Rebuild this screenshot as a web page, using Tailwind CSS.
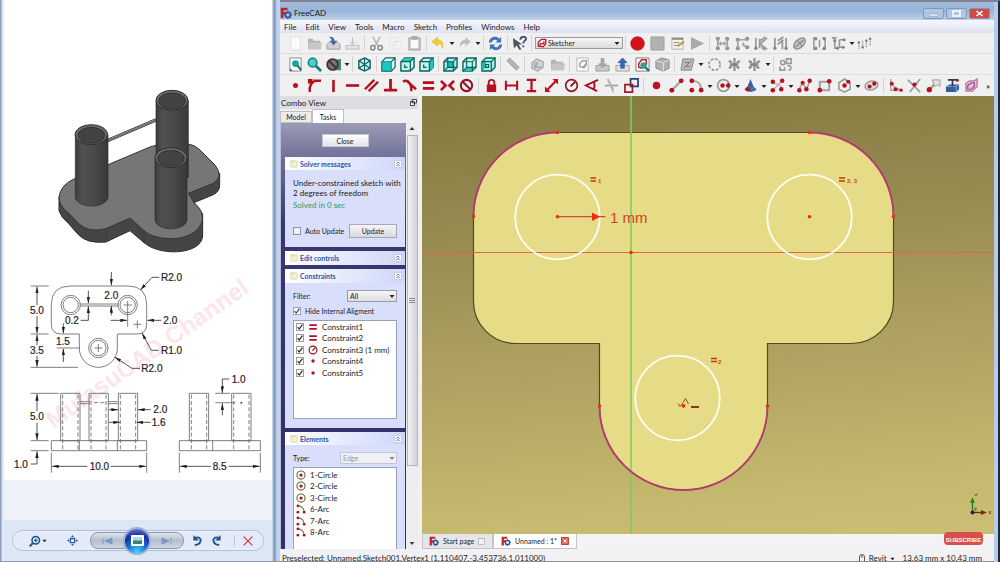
<!DOCTYPE html>
<html lang="en">
<head>
<meta charset="utf-8">
<meta name="viewport" content="width=device-width, initial-scale=1">
<title>FreeCAD</title>
<script src="https://cdn.jsdelivr.net/npm/@tailwindcss/browser@4"></script>
</head>
<body class="h-screen overflow-hidden bg-[#c3d3ea] font-[Lato,'Open_Sans',sans-serif] text-[8px] leading-[10px] text-[#1c1c24]">

<!-- Icon sprite -->
<svg class="hidden" aria-hidden="true">
  <symbol id="new" viewBox="0 0 16 16"><path d="M3 1h10v14H3z" fill="#fbfbfb" stroke="#dedede"/></symbol>
  <symbol id="folder" viewBox="0 0 16 16"><path d="M1 3h5l1 2h7v9H1z" fill="#b4b4b4"/><path d="M2 7h14l-1 7H1z" fill="#c6c6c6"/></symbol>
  <symbol id="save" viewBox="0 0 16 16"><path d="M1 9l3-3h8l3 3v5H1z" fill="#d0d2d6" stroke="#9a9ea6"/><path d="M3 1c4-1 6 1 6 4h3L8 10 4 5h2c0-2-1-3-3-4z" fill="#3f6ba6"/></symbol>
  <symbol id="print" viewBox="0 0 16 16"><path d="M8 1v8M5 6l3 3 3-3M1 10h14v4H1z" fill="#e4e4e4" stroke="#bdbdbd"/></symbol>
  <symbol id="cut" viewBox="0 0 16 16"><path d="M4 1l6 10M12 1L6 11" stroke="#b5b5b5" stroke-width="1.5"/><g fill="none" stroke="#888" stroke-width="1.6"><circle cx="4" cy="12.5" r="2.3"/><circle cx="12" cy="12.5" r="2.3"/></g></symbol>
  <symbol id="copy" viewBox="0 0 16 16"><path d="M2 2h7v8H2zM6 6h8v8H6z" fill="#f3f3f3" stroke="#e2e2e2"/></symbol>
  <symbol id="paste" viewBox="0 0 16 16"><path d="M2 2h12v13H2z" fill="#c9c9c9" stroke="#9f9f9f"/><path d="M4 4h8v9H4z" fill="#fafafa"/><path d="M5 0h6v4H5z" fill="#a9a9a9"/></symbol>
  <symbol id="undo" viewBox="0 0 16 16"><path d="M7 1v3c5 0 7 4 5 9 0-4-2-5-5-5v3L1 6z" fill="#f0cc3a" stroke="#dcb020" stroke-width=".6"/></symbol>
  <symbol id="redo" viewBox="0 0 16 16"><path d="M9 1v3c-5 0-7 4-5 9 0-4 2-5 5-5v3l6-5z" fill="#c0c0c0"/></symbol>
  <symbol id="refresh" viewBox="0 0 16 16"><path d="M1 7c0-6 8-8 11-4l2-2v6H8l2-2C8 3 4 4 4 7zM15 9c0 6-8 8-11 4l-2 2V9h6l-2 2c2 2 6 1 6-2z" fill="#3d74bd"/></symbol>
  <symbol id="whats" viewBox="0 0 16 16"><path d="M1 2l1 11 3-3 3 5 2-1-3-5h4z" fill="#4c5560"/><path d="M9 4c0-4 6-4 6-1 0 2-3 2-3 5M12 10v2" fill="none" stroke="#39506e" stroke-width="2"/></symbol>
  <symbol id="rec" viewBox="0 0 16 16"><circle cx="8" cy="8" r="7.3" fill="#d8101c" stroke="#a50e18" stroke-width=".7"/></symbol>
  <symbol id="stop" viewBox="0 0 16 16"><path d="M1 1h14v14H1z" fill="#b2b2b2" stroke="#9f9f9f"/></symbol>
  <symbol id="macro" viewBox="0 0 16 16"><path d="M2 2h12v12H2z" fill="#f3f3e8" stroke="#b5b5a5"/><path d="M2 2h12v2H2z" fill="#8a8a7a"/><path d="M4 7h6M4 10h4" stroke="#888"/><path d="M15 6l-7 5" stroke="#b8993e" stroke-width="2"/></symbol>
  <symbol id="play" viewBox="0 0 16 16"><path d="M1 1l14 7-14 7z" fill="#a9a9a9"/></symbol>
  <symbol id="gA" viewBox="0 0 16 16"><g fill="#8f8f8f"><circle cx="3" cy="3" r="2.2"/><circle cx="13" cy="3" r="2.2"/><circle cx="3" cy="13" r="2.2"/><circle cx="13" cy="13" r="2.2"/></g><path d="M3 3v10M13 3v10M4 8h8M6 6v4M10 6v4" stroke="#a2a2a2" stroke-width="1.8"/></symbol>
  <symbol id="gB" viewBox="0 0 16 16"><g fill="#8f8f8f"><circle cx="3" cy="4" r="2.2"/><circle cx="13" cy="3" r="2.2"/><circle cx="3" cy="13" r="2.2"/><circle cx="13" cy="12" r="2.2"/></g><path d="M3 4v9M5 4h8M8 9l5 3M9 7v4" stroke="#a2a2a2" stroke-width="1.8"/></symbol>
  <symbol id="gC" viewBox="0 0 16 16"><path d="M2 2v12M6 3v10M7 8l7-6M7 9l7 5M7 5l5-4M8 12l4 3" stroke="#979797" stroke-width="1.8"/><circle cx="2" cy="13" r="1.8" fill="#888"/></symbol>
  <symbol id="gD" viewBox="0 0 16 16"><path d="M2 2v12M14 2v12M5 5l6-4M5 9l6-5M10 4v10" stroke="#979797" stroke-width="1.9"/><circle cx="2" cy="13" r="1.8" fill="#888"/><circle cx="14" cy="13" r="1.8" fill="#888"/></symbol>
  <symbol id="gE" viewBox="0 0 16 16"><ellipse cx="8" cy="8" rx="7.4" ry="4.4" transform="rotate(-42 8 8)" fill="#c5c5c5" stroke="#8c8c8c" stroke-width="1.3"/><path d="M3 12l10-8M6 5l5 6" stroke="#8c8c8c" stroke-width="1.3"/></symbol>
  <symbol id="gF" viewBox="0 0 16 16"><path d="M5 2H2v12h3M11 2h3v12h-3M8 4v8" fill="none" stroke="#959595" stroke-width="1.6"/><g fill="#858585"><circle cx="4" cy="3" r="1.7"/><circle cx="4" cy="13" r="1.7"/><circle cx="13" cy="3" r="1.7"/><circle cx="13" cy="13" r="1.7"/></g></symbol>
  <symbol id="gG" viewBox="0 0 16 16"><path d="M1 2h5M4 5v8h4M9 4h6M9 4v8h5" fill="none" stroke="#959595" stroke-width="1.7"/><g fill="#858585"><circle cx="4" cy="5" r="1.7"/><circle cx="14" cy="4" r="1.7"/><circle cx="7" cy="13" r="1.7"/><circle cx="13" cy="12" r="1.7"/></g></symbol>
  <symbol id="gH" viewBox="0 0 16 16"><path d="M2 7v7M6 5v8M10 4v8M14 2v8" stroke="#9a9a9a" stroke-width="1.3" stroke-dasharray="2 1"/><g fill="#858585"><circle cx="2" cy="7" r="1.4"/><circle cx="6" cy="12" r="1.4"/><circle cx="10" cy="5" r="1.4"/><circle cx="14" cy="3" r="1.4"/></g></symbol>
  <symbol id="fit" viewBox="0 0 16 16"><path d="M2 1h12v14H2z" fill="#fff" stroke="#7b8a8a"/><circle cx="8" cy="7" r="3.6" fill="#1aa398"/><path d="M10 9l4 5" stroke="#0d6d67" stroke-width="2"/><path d="M2 15v-3l3 3z" fill="#555"/></symbol>
  <symbol id="fitsel" viewBox="0 0 16 16"><circle cx="6" cy="6" r="4.6" fill="#4fd0c4" stroke="#0f857c" stroke-width="1.6"/><path d="M9 9l6 6" stroke="#0f857c" stroke-width="3"/></symbol>
  <symbol id="draw" viewBox="0 0 16 16"><path d="M8 3l8-1v12H8z" fill="#3a8d86"/><circle cx="7" cy="8" r="5.7" fill="#777" stroke="#4b2f35" stroke-width="2"/><path d="M3 4l8 8" stroke="#4b2f35" stroke-width="2"/></symbol>
  <symbol id="iso" viewBox="0 0 16 16"><path d="M8 1l6 3v8l-6 3-6-3V4z" fill="#d6f5f1" stroke="#0d625d" stroke-width="1.5"/><path d="M8 1v14M2 4l12 8M14 4L2 12" stroke="#0d625d" stroke-width="1.2"/></symbol>
  <symbol id="front" viewBox="0 0 16 16"><path d="M1 5l4-4h10v10l-4 4H1z" fill="#e9fbf8" stroke="#0d625d" stroke-width="1.3"/><path d="M1 5h10v10H1z" fill="#17cabb" stroke="#0d8880"/><path d="M11 5l4-4" stroke="#0d625d" stroke-width="1.3"/></symbol>
  <symbol id="top" viewBox="0 0 16 16"><path d="M1 5l4-4h10v10l-4 4H1z" fill="#c4f3ee" stroke="#0d625d" stroke-width="1.5"/><path d="M1 5l4-4h10l-4 4z" fill="#17cabb"/><path d="M1 5h10v10M11 5l4-4M5 8v3h3" fill="none" stroke="#0d625d" stroke-width="1.3"/></symbol>
  <symbol id="right" viewBox="0 0 16 16"><path d="M1 5l4-4h10v10l-4 4H1z" fill="#c4f3ee" stroke="#0d625d" stroke-width="1.5"/><path d="M11 5l4-4v10l-4 4z" fill="#17cabb"/><path d="M1 5h10v10M11 5l4-4M5 8v3h3" fill="none" stroke="#0d625d" stroke-width="1.3"/></symbol>
  <symbol id="rear" viewBox="0 0 16 16"><path d="M1 5l4-4h10v10l-4 4H1z" fill="#a6efe8" stroke="#0d625d" stroke-width="1.5"/><path d="M5 5h7v6H5z" fill="#17b9ab"/><path d="M1 5h10v10M11 5l4-4M5 1v10H15M1 15l4-4" fill="none" stroke="#0d625d" stroke-width="1.2"/></symbol>
  <symbol id="bottom" viewBox="0 0 16 16"><path d="M1 5l4-4h10v10l-4 4H1z" fill="#c4f3ee" stroke="#0d625d" stroke-width="1.5"/><path d="M1 15l4-4h10l-4 4z" fill="#17cabb"/><path d="M1 5h10v10M11 5l4-4M5 1v10H15M1 15l4-4" fill="none" stroke="#0d625d" stroke-width="1.2"/></symbol>
  <symbol id="left" viewBox="0 0 16 16"><path d="M1 5l4-4h10v10l-4 4H1z" fill="#a6efe8" stroke="#0d625d" stroke-width="1.5"/><path d="M1 5l4-4v10l-4 4z" fill="#17b9ab"/><path d="M1 5h10v10M11 5l4-4M5 8h3v3H5z" fill="none" stroke="#0d625d" stroke-width="1.3"/></symbol>
  <symbol id="measure" viewBox="0 0 16 16"><path d="M2 4l3-3 10 10-3 3z" fill="#b5b5b5" stroke="#9c9c9c"/></symbol>
  <symbol id="part" viewBox="0 0 16 16"><path d="M2 6l5-4 7 3v6l-6 4-6-3z" fill="#d3d3d3" stroke="#a8a8a8" stroke-width="1.3"/><path d="M5 5v7M8 5l-2 6h6" fill="none" stroke="#a8a8a8" stroke-width="1.5"/></symbol>
  <symbol id="sketch" viewBox="0 0 16 16"><path d="M2 1h12v14H2z" fill="#fafafa" stroke="#b8b8b8"/><path d="M5 10V7l3-3h4v4l-2 3z" fill="none" stroke="#a6a6a6" stroke-width="1.6"/><path d="M8 12l4-5" stroke="#999" stroke-width="1.4"/></symbol>
  <symbol id="mapdown" viewBox="0 0 16 16"><path d="M1 9h14v6H1z" fill="#c9c9c9" stroke="#9e9e9e"/><path d="M6 1h4v6h3l-5 5-5-5h3z" fill="#a5a5a5"/></symbol>
  <symbol id="leave" viewBox="0 0 16 16"><path d="M1 9h14v6H1z" fill="#e2e2e2" stroke="#9e9e9e"/><path d="M8 1l5 5h-3v6H6V6H3z" fill="#3568b5" stroke="#234f92" stroke-width=".6"/></symbol>
  <symbol id="viewsk" viewBox="0 0 16 16"><path d="M1 1h14v14H1z" fill="#fff" stroke="#777"/><path d="M4 11V7l3-4h5v5l-4 4z" fill="none" stroke="#c8202e" stroke-width="1.6"/><circle cx="9" cy="9" r="3.3" fill="#2aa398"/><path d="M11 11l4 4" stroke="#117a70" stroke-width="2.4"/></symbol>
  <symbol id="cubeg" viewBox="0 0 16 16"><path d="M1 4l6-3 8 2v9l-6 3-8-3z" fill="#b0b0b0" stroke="#8b8b8b"/><path d="M1 4l8 2v9M9 6l6-3" fill="none" stroke="#e5e5e5"/></symbol>
  <symbol id="close" viewBox="0 0 16 16"><path d="M3 2h12l-3 12H1z" fill="#b9b9b9" stroke="#858585"/><path d="M4 12l8-8M5 6h5M6 10h5" stroke="#777"/></symbol>
  <symbol id="dash" viewBox="0 0 16 16"><circle cx="8" cy="8" r="6" fill="none" stroke="#9e9e9e" stroke-width="2" stroke-dasharray="3 1.7"/></symbol>
  <symbol id="knot" viewBox="0 0 16 16"><path d="M8 1v14M2 4l11 8M2 12l12-8M3 8h10" stroke="#8f8f8f" stroke-width="2.4" stroke-dasharray="4 1"/><circle cx="8" cy="8" r="2.4" fill="#858585"/></symbol>
  <symbol id="virt" viewBox="0 0 16 16"><g fill="none" stroke="#999" stroke-width="1.7"><circle cx="5" cy="6" r="2.3"/><path d="M9 2h5v5H9zM10 9c5 0 5 5 1 5M2 10v4h5v-3"/></g></symbol>
  <symbol id="pt" viewBox="0 0 16 16"><circle cx="8" cy="8" r="2.7" fill="#bd1022"/></symbol>
  <symbol id="ptbig" viewBox="0 0 16 16"><circle cx="8" cy="8" r="4" fill="#c01020"/></symbol>
  <symbol id="tanpt" viewBox="0 0 16 16"><path d="M3 15C2 9 5 4 9 3M7 3h8" fill="none" stroke="#b31020" stroke-width="2.6"/><path d="M1 1h5v5H1z" fill="#b31020"/></symbol>
  <symbol id="vert" viewBox="0 0 16 16"><path d="M8 2v13" stroke="#b31020" stroke-width="2.8"/></symbol>
  <symbol id="horiz" viewBox="0 0 16 16"><path d="M1 8h14" stroke="#b31020" stroke-width="2.8"/></symbol>
  <symbol id="para" viewBox="0 0 16 16"><path d="M1 12L11 2M5 14L15 4" stroke="#b31020" stroke-width="2.6"/></symbol>
  <symbol id="perp" viewBox="0 0 16 16"><path d="M8 1v12M1 13h14" stroke="#b31020" stroke-width="3"/></symbol>
  <symbol id="tan" viewBox="0 0 16 16"><path d="M1 4c5-3 9 1 9 10M5 3l10 9" fill="none" stroke="#b31020" stroke-width="2.6"/></symbol>
  <symbol id="eq" viewBox="0 0 16 16"><path d="M2 5h12M2 11h12" stroke="#b31020" stroke-width="3"/></symbol>
  <symbol id="sym" viewBox="0 0 16 16"><path d="M1 3l5 5-5 5M15 3l-5 5 5 5" fill="none" stroke="#b31020" stroke-width="2.8"/></symbol>
  <symbol id="block" viewBox="0 0 16 16"><circle cx="8" cy="8" r="6" fill="none" stroke="#8e1420" stroke-width="2.2"/><path d="M4 4l8 8" stroke="#8e1420" stroke-width="2.2"/></symbol>
  <symbol id="lock" viewBox="0 0 16 16"><path d="M5 8V5a3 3 0 0 1 6 0v3" fill="none" stroke="#b31020" stroke-width="2"/><path d="M3 7h10v8H3z" fill="#b31020"/></symbol>
  <symbol id="hd" viewBox="0 0 16 16"><path d="M2 3v10M14 3v10M2 8h12" stroke="#b31020" stroke-width="2.2"/></symbol>
  <symbol id="vd" viewBox="0 0 16 16"><path d="M3 2h10M3 14h10M8 2v12" stroke="#b31020" stroke-width="2.4"/></symbol>
  <symbol id="dist" viewBox="0 0 16 16"><path d="M3 13L13 3" stroke="#c41020" stroke-width="2.4"/><path d="M1 9l6 6H1zM9 1h6v6z" fill="#c41020"/></symbol>
  <symbol id="rad" viewBox="0 0 16 16"><circle cx="8" cy="8" r="6.2" fill="none" stroke="#8e1420" stroke-width="1.8"/><path d="M7 9l5-5" stroke="#8e1420" stroke-width="2"/></symbol>
  <symbol id="ang" viewBox="0 0 16 16"><path d="M15 2L2 8l12 6M10 4c2 3 2 5 0 8" fill="none" stroke="#a31020" stroke-width="2"/></symbol>
  <symbol id="snell" viewBox="0 0 16 16"><path d="M1 8h14" stroke="#999" stroke-width="1.6"/><path d="M4 1l6 14M5 3l5 9" stroke="#b6b6b6" stroke-width="2"/></symbol>
  <symbol id="toggle" viewBox="0 0 16 16"><path d="M7 1h8v8H7z" fill="none" stroke="#263f78" stroke-width="1.8"/><path d="M1 7h8v8H1z" fill="none" stroke="#9e1826" stroke-width="1.8"/></symbol>
  <symbol id="line" viewBox="0 0 16 16"><path d="M3 13L13 3" stroke="#a3a3a3" stroke-width="2.4"/><g fill="#b8101f"><circle cx="3" cy="13" r="2.6"/><circle cx="13" cy="3" r="2.6"/></g></symbol>
  <symbol id="arc" viewBox="0 0 16 16"><path d="M4 3c6 0 9 4 9 10" fill="none" stroke="#a3a3a3" stroke-width="2"/><g fill="#b8101f"><circle cx="3" cy="3" r="2.5"/><circle cx="3" cy="13" r="2.5"/><circle cx="13" cy="13" r="2.5"/></g></symbol>
  <symbol id="circ" viewBox="0 0 16 16"><circle cx="8" cy="8" r="6.3" fill="none" stroke="#989898" stroke-width="1.8"/><g fill="#b8101f"><circle cx="7" cy="8" r="2.4"/><circle cx="13" cy="8" r="2.4"/></g></symbol>
  <symbol id="conic" viewBox="0 0 16 16"><path d="M8 1l4 10H4z" fill="#3a5f97"/><ellipse cx="8" cy="12" rx="6" ry="2.8" fill="#446ca8"/><circle cx="5" cy="12" r="2.3" fill="#b8101f"/></symbol>
  <symbol id="bsp" viewBox="0 0 16 16"><path d="M3 3c3 8 7-2 10 10M3 13L13 3" fill="none" stroke="#b4b4b4" stroke-width="1.4"/><g fill="#b8101f"><circle cx="3" cy="4" r="2.4"/><circle cx="13" cy="3" r="2.4"/><circle cx="3" cy="13" r="2.4"/><circle cx="12" cy="12" r="2.4"/></g></symbol>
  <symbol id="poly" viewBox="0 0 16 16"><path d="M2 13l4-8 4 7 4-9" fill="none" stroke="#a3a3a3" stroke-width="1.8"/><g fill="#b8101f"><circle cx="2.5" cy="13" r="2.4"/><circle cx="6" cy="5" r="2.2"/><circle cx="10" cy="12" r="2.4"/><circle cx="13.5" cy="3" r="2.4"/></g></symbol>
  <symbol id="rect" viewBox="0 0 16 16"><path d="M3 4h10v9H3z" fill="none" stroke="#a0a0a0" stroke-width="2.2"/><g fill="#b8101f"><circle cx="13" cy="3.5" r="2.5"/><circle cx="3" cy="13" r="2.5"/></g></symbol>
  <symbol id="hex" viewBox="0 0 16 16"><path d="M8 1l6 4v7l-6 3-6-3V5z" fill="none" stroke="#9e9e9e" stroke-width="1.8"/><g fill="#b8101f"><circle cx="8" cy="8" r="2.4"/><circle cx="12" cy="4" r="2.2"/></g></symbol>
  <symbol id="slot" viewBox="0 0 16 16"><ellipse cx="8" cy="8" rx="7" ry="4.6" transform="rotate(-15 8 8)" fill="#ddd" stroke="#9e9e9e" stroke-width="1.6"/><g fill="#b8101f"><circle cx="6" cy="9" r="2.1"/><circle cx="11" cy="6" r="2.3"/></g></symbol>
  <symbol id="fillet" viewBox="0 0 16 16"><path d="M3 1v12h11M4 4c1 5 3 7 9 8" fill="none" stroke="#a5a5a5" stroke-width="1.5"/><g fill="#b8101f"><circle cx="4" cy="6" r="2.1"/><circle cx="8" cy="12" r="2.1"/><circle cx="14" cy="13" r="1.7"/></g></symbol>
  <symbol id="trim" viewBox="0 0 16 16"><path d="M1 2l13 13M14 1L3 15" stroke="#999" stroke-width="1.7"/><circle cx="8" cy="7" r="2.3" fill="#b8101f"/></symbol>
  <symbol id="extend" viewBox="0 0 16 16"><path d="M3 13l7-7" stroke="#a0a0a0" stroke-width="2.6"/><path d="M7 2h8v7l-3-2-2 2-2-3z" fill="#e0e0e0" stroke="#9a9a9a"/><circle cx="3.5" cy="12.5" r="2.8" fill="#b8101f"/></symbol>
  <symbol id="ext" viewBox="0 0 16 16"><path d="M1 9l4-2h10v5l-3 3H1z" fill="#355f99"/><path d="M1 9h11v6M12 9l3-2" fill="none" stroke="#82a9da"/><path d="M8 3v6M3 2h11" stroke="#2e3b52" stroke-width="1.8"/><circle cx="13" cy="2.5" r="1.6" fill="#b8101f"/></symbol>
  <symbol id="carbon" viewBox="0 0 16 16"><path d="M2 6l4-3h5l3-2v8l-5 5H2z" fill="#e7bfdb" stroke="#b876a6" stroke-width="1.4"/><path d="M4 12V8l4-3h3v4l-3 3z" fill="none" stroke="#8f4a80" stroke-width="1.2"/></symbol>
  <symbol id="logo" viewBox="0 0 16 16"><path d="M1 1h9v3.4H4.6v2.4H8V10H4.600v5H1z" fill="#c5202e"/><circle cx="10.500" cy="10.500" r="3.400" fill="none" stroke="#2f5a94" stroke-width="2.400"/><path d="M10.500 5v2M10.500 14v2M5.500 10.500h1.500M14 10.500h2M7 7l1 1M13 13l1.500 1.500M14 7l-1 1M7 14l1-1" stroke="#2f5a94" stroke-width="1.600"/></symbol>
  <symbol id="chev" viewBox="0 0 10 10"><path d="M.5.5h9v9h-9z" fill="#fbfcff" stroke="#b6bedb"/><path d="M3 4.500l2-2 2 2M3 7.500l2-2 2 2" fill="none" stroke="#4a5792" stroke-width="1.100"/></symbol>
  <symbol id="note" viewBox="0 0 10 10"><path d="M1 1h8v8H1z" fill="#f4f2cf" stroke="#d7d7bd"/><path d="M1 1h5v2H1z" fill="#e6dc8c"/></symbol>
  <symbol id="dd" viewBox="0 0 6 6"><path d="M.5 2h5L3 5z" fill="#222"/></symbol>
  <symbol id="el-circle" viewBox="0 0 16 16"><circle cx="8" cy="8" r="6.500" fill="none" stroke="#5e6e3c" stroke-width="1.800"/><circle cx="8" cy="8" r="2.600" fill="#a01a22"/></symbol>
  <symbol id="el-arc" viewBox="0 0 16 16"><path d="M3 3c6 0 10 4 10 10" fill="none" stroke="#6c7a45" stroke-width="1.800"/><g fill="#a5182a"><circle cx="3" cy="3" r="2.200"/><circle cx="3" cy="13" r="2.200"/><circle cx="13" cy="13" r="2.200"/></g></symbol>
</svg>

<div class="flex h-full">

  <!-- Photo viewer window -->
  <section aria-label="Photo viewer" class="flex h-full w-[28%] flex-none flex-col border-b border-[#8d9ab0] bg-[linear-gradient(90deg,#8e9fbd_0,#8e9fbd_1px,#d9e4f4_2px,#e6eefa_4px,#dfe8f6_97%,#7f95b8_98%,#c2d3ec_99%,#c2d3ec_100%)]">
    <div class="ml-1 mr-2 bg-white">
      <svg viewBox="12 0 804 1440" class="block w-full" role="img" aria-label="Part drawing with isometric view and dimensions">
        <defs>
          <linearGradient id="cyl" x1="0" x2="1"><stop offset="0" stop-color="#3c3c3c"/><stop offset=".2" stop-color="#505050"/><stop offset=".55" stop-color="#4a4a4a"/><stop offset="1" stop-color="#393939"/></linearGradient>
          <marker id="ar" viewBox="0 0 20 10" refX="20" refY="5" markerWidth="20" markerHeight="10" markerUnits="userSpaceOnUse" orient="auto-start-reverse"><path d="M0 0l20 5-20 5z" fill="#222"/></marker>
        </defs>
        <g transform="translate(0 180)">
          <path d="M177 410V452Q182 470 205 490L235 524Q262 552 318 546L390 512L432 548C470 580 550 585 590 558Q608 545 608 525V462L582 428L640 404Q659 395 659 375V340L560 300Z" fill="#454545" stroke="#2e2e2e" stroke-width="3"/>
          <path d="M177 412Q180 375 226 355L322 315L452 260Q490 248 565 252Q585 255 600 270L645 315Q672 350 640 370L565 400L582 428Q610 450 607 480C600 515 560 538 505 536Q455 533 432 512L390 474L318 506Q265 520 235 490L205 458Q178 440 177 412Z" fill="#767676" stroke="#343434" stroke-width="3"/>
          <path d="M322 238l148-63M322 246l148-63" stroke="#3a3a3a" stroke-width="3"/><path d="M322 242l148-63" stroke="#6f6f6f" stroke-width="5"/>
          <path d="M468 122v230h97V122z" fill="url(#cyl)" stroke="#2c2c2c" stroke-width="2"/>
          <ellipse cx="516" cy="121" rx="48" ry="30" fill="#6a6a6a" stroke="#2c2c2c" stroke-width="3"/><ellipse cx="516" cy="123" rx="40" ry="24" fill="#434343" stroke="#222" stroke-width="2"/>
          <path d="M226 224v190c10 32 88 32 98 0V224z" fill="url(#cyl)" stroke="#2c2c2c" stroke-width="2"/>
          <ellipse cx="274" cy="224" rx="49" ry="30" fill="#6a6a6a" stroke="#2c2c2c" stroke-width="3"/><ellipse cx="274" cy="226" rx="40" ry="24" fill="#434343" stroke="#222" stroke-width="2"/>
          <path d="M465 293v188c8 34 88 34 96 0V293z" fill="url(#cyl)" stroke="#2c2c2c" stroke-width="2"/>
          <ellipse cx="513" cy="293" rx="48" ry="30" fill="#6a6a6a" stroke="#2c2c2c" stroke-width="3"/><ellipse cx="513" cy="295" rx="40" ry="24" fill="#434343" stroke="#222" stroke-width="2"/>
          <path d="M318 508v38M432 514v34M205 460v30" stroke="#383838" stroke-width="2"/>
        </g>
        <g transform="translate(0 780)" font-family="'Liberation Sans',Arial,sans-serif">
          <text x="160" y="508" font-size="73" font-weight="bold" fill="#fbe6e9" transform="rotate(-35 160 508)">MufasuCAD Channel</text>
          <g fill="none" stroke="#666" stroke-width="2.500">
            <path d="M212 78H384q56 0 56 56v58q0 30-30 30H352v43a57 57 0 0 1-114 0v-43H184q-30 0-30-30v-58q0-56 58-56z"/>
            <circle cx="212" cy="135" r="29"/><circle cx="212" cy="135" r="23"/>
            <circle cx="383" cy="135" r="29"/><circle cx="383" cy="135" r="23"/>
            <circle cx="295" cy="264" r="29"/><circle cx="295" cy="264" r="23"/>
            <path d="M241 132h113M241 138h113M371 135h26M383 123v77M400 193h24M412 181v24M283 264h24M295 252v24"/>
            <path d="M92 78h54M92 222h54M92 322h142M170 264h70"/>
            <path d="M154 542h286v30H154zM238 542v30M352 542v30M182 400h58v142h-58zM267 400h58v142h-58zM355 400h58v142h-58zM568 400h58v142h-58zM695 400h58v142h-58zM538 542h243v30H538zM638 542v30M241 425h28M325 425h28M241 431h28M325 431h28"/>
            <path d="M188 404v166M234 404v166M273 404v166M318 404v166M361 404v166M407 404v166M574 404v166M620 404v166M701 404v166M747 404v166M282 428h40" stroke-dasharray="12 7"/>
            <path d="M92 400h84M92 542h54M92 572h54M154 578v60M440 578v60M538 578v60M781 578v60M646 400h44M646 428h60"/>
          </g>
          <g fill="none" stroke="#333" stroke-width="2.500">
            <path d="M111 135V80" marker-end="url(#ar)"/><path d="M111 168v52" marker-end="url(#ar)"/>
            <path d="M111 256v-32" marker-end="url(#ar)"/><path d="M111 288v32" marker-end="url(#ar)"/>
            <path d="M111 454v-52" marker-end="url(#ar)"/><path d="M111 488v52" marker-end="url(#ar)"/>
            <path d="M92 612h19v-38" marker-end="url(#ar)"/>
            <path d="M334 36v40" marker-end="url(#ar)"/><path d="M334 166v-28" marker-end="url(#ar)"/>
            <path d="M265 92v38" marker-end="url(#ar)"/><path d="M242 181h23v-42" marker-end="url(#ar)"/>
            <path d="M190 190v30" marker-end="url(#ar)"/><path d="M190 306v-40" marker-end="url(#ar)"/>
            <path d="M332 181h49" marker-end="url(#ar)"/><path d="M484 181h-42" marker-end="url(#ar)"/>
            <path d="M478 52h-22l-35 38" marker-end="url(#ar)"/><path d="M476 271h-22l-28-52" marker-end="url(#ar)"/><path d="M420 325h-24l-52-34" marker-end="url(#ar)"/>
            <path d="M327 449h27" marker-end="url(#ar)"/><path d="M452 449h-38" marker-end="url(#ar)"/>
            <path d="M327 487h33" marker-end="url(#ar)"/><path d="M452 487h-42" marker-end="url(#ar)"/>
            <path d="M262 619H156" marker-end="url(#ar)"/><path d="M332 619h106" marker-end="url(#ar)"/>
            <path d="M632 619h-92" marker-end="url(#ar)"/><path d="M686 619h93" marker-end="url(#ar)"/>
            <path d="M688 357h-21v42" marker-end="url(#ar)"/><path d="M667 466v-36" marker-end="url(#ar)"/>
          </g>
          <circle cx="724" cy="428" r="3" fill="#444"/>
          <g font-size="30" fill="#1e1e1e" stroke="#1e1e1e" stroke-width=".6">
            <text x="90" y="161">5.0</text><text x="90" y="283">3.5</text><text x="90" y="480">5.0</text><text x="42" y="623">1.0</text>
            <text x="313" y="118">2.0</text><text x="195" y="192">0.2</text><text x="168" y="255">1.5</text><text x="490" y="192">2.0</text>
            <text x="483" y="63">R2.0</text><text x="483" y="283">R1.0</text><text x="424" y="336">R2.0</text>
            <text x="460" y="460">2.0</text><text x="455" y="498">1.6</text><text x="269" y="630">10.0</text><text x="638" y="630">8.5</text><text x="695" y="368">1.0</text>
          </g>
        </g>
      </svg>
    </div>
    <div class="ml-1 mr-2 min-h-0 flex-1 bg-[#eff2fa]"></div>
    <div class="ml-1 mr-2 flex h-[41px] flex-none items-center bg-[#dce6f4] px-2">
      <div class="flex h-[21px] w-full items-center rounded-full border border-[#b3c0d6] bg-[#e2ebf7] pl-4 shadow-[inset_0_0_2px_white]">
        <button aria-label="Change display size" class="flex items-center gap-px"><svg class="size-3" viewBox="0 0 16 16"><circle cx="9" cy="7" r="5" fill="#d5ecfb" stroke="#1e4e84" stroke-width="2"/><path d="M5 11l-4 4" stroke="#1e4e84" stroke-width="2.500"/><path d="M6.500 7h5M9 4.500v5" stroke="#1e4e84" stroke-width="1.500"/></svg><svg class="size-[5px]"><use href="#dd"/></svg></button>
        <button aria-label="Actual size" class="ml-5"><svg class="size-[11px]" viewBox="0 0 16 16"><path d="M5 5h6v6H5z" fill="#e5f3ff" stroke="#2d5c95" stroke-width="2"/><path d="M8 0l2 3H6zM8 16l2-3H6zM0 8l3-2v4zM16 8l-3-2v4z" fill="#2d5c95"/></svg></button>
        <div class="ml-3 flex h-[17px] w-[94px] items-center justify-between rounded-lg border border-[#8a99b3] bg-linear-to-b from-[#dfe4ec] via-[#b7bfcc] to-[#ced6e2]">
          <button aria-label="Previous" class="flex flex-1 justify-center"><svg class="h-2 w-3" viewBox="0 0 12 8"><path d="M2 1v6M11 1v6L4 4z" fill="#7d98c5" stroke="#7d98c5"/></svg></button>
          <button aria-label="Play slide show" class="flex size-[28px] flex-none items-center justify-center rounded-full border-2 border-[#9fb0d3] bg-[radial-gradient(circle_at_50%_95%,#42d8ff_0,#1976d3_35%,#182d9a_65%,#8d9be2_100%)]"><svg class="h-[11px] w-[13px]" viewBox="0 0 13 11"><path d="M.5.5h12v10H.5z" fill="#f6fbff" stroke="#fff"/><path d="M2 2h9v7H2z" fill="#b4dbe0"/><path d="M2 6c3-2 5 1 9-1v4H2z" fill="#3c7f7a"/></svg></button>
          <button aria-label="Next" class="flex flex-1 justify-center"><svg class="h-2 w-3" viewBox="0 0 12 8"><path d="M10 1v6M1 1v6l7-3z" fill="#7d98c5" stroke="#7d98c5"/></svg></button>
        </div>
        <button aria-label="Rotate counterclockwise" class="ml-2"><svg class="size-[11px]" viewBox="0 0 16 16"><path d="M4 5c6-4 10 1 8 5-1 3-5 5-8 4" fill="none" stroke="#1d4f8d" stroke-width="2.600"/><path d="M2 0v8h8z" fill="#1d4f8d"/></svg></button>
        <button aria-label="Rotate clockwise" class="ml-2"><svg class="size-[11px]" viewBox="0 0 16 16"><path d="M12 5c-6-4-10 1-8 5 1 3 5 5 8 4" fill="none" stroke="#1d4f8d" stroke-width="2.600"/><path d="M14 0v8H6z" fill="#1d4f8d"/></svg></button>
        <span class="ml-3 h-[11px] w-px bg-[#b7c4d9]"></span>
        <button aria-label="Delete" class="ml-2"><svg class="size-[10px]" viewBox="0 0 16 16"><path d="M1 1l14 14M15 1L1 15" stroke="#cf4050" stroke-width="2.200"/></svg></button>
      </div>
    </div>
  </section>

  <!-- FreeCAD window -->
  <main class="flex h-full min-w-0 flex-1 flex-col border-r-2 border-t-2 border-r-[#20283c] border-t-[#7d8193] bg-[#b6cbe7] pr-1">
    <header class="flex h-[18px] flex-none items-center bg-linear-to-b from-[#a3bbdc] via-[#98b5da] to-[#bdd1ea] pt-1">
      <svg class="size-3"><use href="#logo"/></svg>
      <h1 class="ml-[2px] text-[8px]">FreeCAD</h1>
      <div class="ml-auto mr-1 flex gap-[2px] [&>button]:flex [&>button]:h-[11px] [&>button]:w-[21px] [&>button]:items-center [&>button]:justify-center [&>button]:rounded-xs [&>button]:border [&>button]:border-[#7f97b8] [&_svg]:h-[7px] [&_svg]:w-[9px]">
        <button aria-label="Minimize" class="bg-[#afc6e2]"><svg viewBox="0 0 9 7"><path d="M0 4h9v2H0z" fill="#fff" stroke="#6f819d" stroke-width=".5"/></svg></button>
        <button aria-label="Maximize" class="bg-[#afc6e2]"><svg viewBox="0 0 9 7"><path d="M1 1h7v5H1z" fill="none" stroke="#fff" stroke-width="1.500"/></svg></button>
        <button aria-label="Close window" class="bg-[#cf4a43]"><svg viewBox="0 0 9 7"><path d="M1.500 1l6 5M7.500 1l-6 5" stroke="#fff" stroke-width="1.600"/></svg></button>
      </div>
    </header>
    <nav aria-label="Main menu" class="flex h-[13px] flex-none items-center gap-[9px] bg-linear-to-b from-[#f6f7fc] to-[#dfe1f2] pl-1 [&>button]:leading-[12px]">
      <button>File</button><button>Edit</button><button>View</button><button>Tools</button><button>Macro</button><button>Sketch</button><button>Profiles</button><button>Windows</button><button>Help</button>
    </nav>

    <!-- Toolbars -->
    <div class="flex-none bg-[#f0f0f0] [&_button]:flex [&_button]:flex-none [&_button]:justify-center [&_button>svg]:size-[15px] [&_hr]:mx-[2px] [&_hr]:h-4 [&_hr]:w-px [&_hr]:flex-none [&_hr]:border-0 [&_hr]:bg-[#d5d5d5] [&_span>svg]:size-[6px] [&_span]:flex [&_span]:w-[7px] [&_span]:flex-none [&_span]:justify-center">
      <div role="toolbar" aria-label="File and macro" class="flex h-[21px] items-center border-b border-[#dcdcdc] pl-[6px] [&>button]:w-[19px] [&>div]:flex [&>div]:items-center">
        <button aria-label="New"><svg><use href="#new"/></svg></button><button aria-label="Open"><svg><use href="#folder"/></svg></button><button aria-label="Save"><svg><use href="#save"/></svg></button><button aria-label="Print"><svg><use href="#print"/></svg></button><hr>
        <button aria-label="Cut"><svg><use href="#cut"/></svg></button><button aria-label="Copy"><svg><use href="#copy"/></svg></button><button aria-label="Paste"><svg><use href="#paste"/></svg></button><hr>
        <button aria-label="Undo"><svg><use href="#undo"/></svg></button><span><svg><use href="#dd"/></svg></span><button aria-label="Redo"><svg><use href="#redo"/></svg></button><span><svg><use href="#dd"/></svg></span><hr>
        <button aria-label="Refresh"><svg><use href="#refresh"/></svg></button><hr><button aria-label="What's this"><svg><use href="#whats"/></svg></button><hr>
        <label class="ml-px flex h-3 w-[88px] flex-none items-center border border-[#9a9a9a] bg-linear-to-b from-[#f6f6f6] to-[#dcdcdc]">
          <svg class="ml-px size-[10px]" viewBox="0 0 16 16"><path d="M2 13V7l5-5h7v7l-4 5z" fill="none" stroke="#b81c2c" stroke-width="2"/><path d="M5 9h6v-4M5 9v4" fill="none" stroke="#b81c2c" stroke-width="2"/></svg>
          <select aria-label="Workbench" class="min-w-0 flex-1 appearance-none pl-px text-[7px] leading-[10px]"><option>Sketcher</option></select>
          <svg class="mr-[2px] size-[6px]"><use href="#dd"/></svg>
        </label>
        <hr class="ml-1"><button aria-label="Record macro"><svg><use href="#rec"/></svg></button><div class="[&>button]:w-5"><button aria-label="Stop macro"><svg><use href="#stop"/></svg></button><button aria-label="Macros"><svg><use href="#macro"/></svg></button><button aria-label="Run macro"><svg><use href="#play"/></svg></button></div><hr>
        <div class="[&>button]:w-5"><button aria-label="Close shape"><svg><use href="#gA"/></svg></button><button aria-label="Connect edges"><svg><use href="#gB"/></svg></button></div><button aria-label="Select constraints"><svg><use href="#gC"/></svg></button><button aria-label="Select elements"><svg><use href="#gD"/></svg></button><button aria-label="Internal geometry"><svg><use href="#gE"/></svg></button><div class="[&>button]:w-5"><button aria-label="Symmetry"><svg><use href="#gF"/></svg></button></div><button aria-label="Clone"><svg><use href="#gG"/></svg></button><span><svg><use href="#dd"/></svg></span><button aria-label="Array"><svg><use href="#gH"/></svg></button>
      </div>
      <div role="toolbar" aria-label="View" class="flex h-[21px] items-center border-b border-[#dcdcdc] pl-[6px] [&>button]:w-[19px] [&>div]:flex [&>div]:items-center">
        <button aria-label="Fit all"><svg><use href="#fit"/></svg></button><button aria-label="Fit selection"><svg><use href="#fitsel"/></svg></button><button aria-label="Draw style"><svg><use href="#draw"/></svg></button><span><svg><use href="#dd"/></svg></span><hr>
        <button aria-label="Isometric"><svg><use href="#iso"/></svg></button><hr>
        <button aria-label="Front"><svg><use href="#front"/></svg></button><button aria-label="Top"><svg><use href="#top"/></svg></button><button aria-label="Right"><svg><use href="#right"/></svg></button><hr>
        <button aria-label="Rear"><svg><use href="#rear"/></svg></button><button aria-label="Bottom"><svg><use href="#bottom"/></svg></button><button aria-label="Left"><svg><use href="#left"/></svg></button><hr>
        <button aria-label="Measure"><svg><use href="#measure"/></svg></button><hr>
        <div class="[&>button]:w-5"><button aria-label="Part"><svg><use href="#part"/></svg></button><button aria-label="Group"><svg><use href="#folder"/></svg></button></div><hr>
        <div class="[&>button]:w-5"><button aria-label="New sketch"><svg><use href="#sketch"/></svg></button><button aria-label="Edit sketch"><svg><use href="#mapdown"/></svg></button><button aria-label="Leave sketch"><svg><use href="#leave"/></svg></button><button aria-label="View sketch"><svg><use href="#viewsk"/></svg></button><button aria-label="Map sketch"><svg><use href="#cubeg"/></svg></button></div><hr>
        <div class="[&>button]:w-5"><button aria-label="B-spline degree"><svg><use href="#close"/></svg></button><span><svg><use href="#dd"/></svg></span><button aria-label="Convert to B-spline"><svg><use href="#dash"/></svg></button><button aria-label="Increase degree"><svg><use href="#knot"/></svg></button><button aria-label="Knot multiplicity"><svg><use href="#knot"/></svg></button><span><svg><use href="#dd"/></svg></span></div><hr>
        <button aria-label="Virtual space"><svg><use href="#virt"/></svg></button>
      </div>
      <div role="toolbar" aria-label="Sketch" class="flex h-[21px] items-center pl-[6px] [&>div]:flex [&>div]:items-center">
        <div class="[&>button]:w-[19px]"><button aria-label="Coincident"><svg><use href="#pt"/></svg></button><button aria-label="Point on object"><svg><use href="#tanpt"/></svg></button><button aria-label="Vertical"><svg><use href="#vert"/></svg></button><button aria-label="Horizontal"><svg><use href="#horiz"/></svg></button><button aria-label="Parallel"><svg><use href="#para"/></svg></button><button aria-label="Perpendicular"><svg><use href="#perp"/></svg></button><button aria-label="Tangent"><svg><use href="#tan"/></svg></button><button aria-label="Equal"><svg><use href="#eq"/></svg></button><button aria-label="Symmetric"><svg><use href="#sym"/></svg></button><button aria-label="Block"><svg><use href="#block"/></svg></button></div><hr>
        <div class="[&>button]:w-5"><button aria-label="Lock"><svg><use href="#lock"/></svg></button><button aria-label="Horizontal distance"><svg><use href="#hd"/></svg></button><button aria-label="Vertical distance"><svg><use href="#vd"/></svg></button><button aria-label="Distance"><svg><use href="#dist"/></svg></button><button aria-label="Radius"><svg><use href="#rad"/></svg></button><button aria-label="Angle"><svg><use href="#ang"/></svg></button><button aria-label="Snell's law"><svg><use href="#snell"/></svg></button><button aria-label="Toggle driving"><svg><use href="#toggle"/></svg></button></div><hr>
        <div class="[&>button]:w-5"><button aria-label="Point"><svg><use href="#ptbig"/></svg></button><button aria-label="Line"><svg><use href="#line"/></svg></button><button aria-label="Arc"><svg><use href="#arc"/></svg></button><span><svg><use href="#dd"/></svg></span><button aria-label="Circle"><svg><use href="#circ"/></svg></button><span><svg><use href="#dd"/></svg></span><button aria-label="Conic"><svg><use href="#conic"/></svg></button><span><svg><use href="#dd"/></svg></span><button aria-label="B-spline"><svg><use href="#bsp"/></svg></button><span><svg><use href="#dd"/></svg></span><button aria-label="Polyline"><svg><use href="#poly"/></svg></button><button aria-label="Rectangle"><svg><use href="#rect"/></svg></button><button aria-label="Polygon"><svg><use href="#hex"/></svg></button><span><svg><use href="#dd"/></svg></span><button aria-label="Slot"><svg><use href="#slot"/></svg></button></div><hr>
        <div class="[&>button]:w-[19px]"><button aria-label="Fillet"><svg><use href="#fillet"/></svg></button><button aria-label="Trim"><svg><use href="#trim"/></svg></button><button aria-label="Extend"><svg><use href="#extend"/></svg></button><button aria-label="External geometry"><svg><use href="#ext"/></svg></button><button aria-label="Carbon copy"><svg><use href="#carbon"/></svg></button></div>
        <button aria-label="More tools" class="ml-auto w-3 font-bold">»</button>
      </div>
    </div>

    <div class="flex min-h-0 flex-1">
      <!-- Combo view -->
      <aside class="flex w-[142px] flex-none flex-col bg-[#f0f0f0] pr-1">
        <div class="flex h-[13px] flex-none items-center justify-between bg-[#dedee2] px-px text-[8px]"><h2>Combo View</h2><button aria-label="Float panel"><svg class="size-[7px]" viewBox="0 0 8 8"><path d="M2.500.5h5v4h-5zM.5 3h4.500v4.500H.5z" fill="#fff" stroke="#222"/></svg></button></div>
        <div role="tablist" class="flex h-[14px] flex-none items-end text-[7px] leading-[10px]">
          <button role="tab" aria-selected="false" class="h-3 w-8 border border-[#c0c0c0] bg-[#ececec]">Model</button><button role="tab" aria-selected="true" class="h-[14px] w-8 border border-b-0 border-[#c0c0c0] bg-white">Tasks</button>
        </div>
        <div class="flex min-h-0 flex-1 border-l border-[#b9bdd6]">
          <div class="min-w-0 flex-1 overflow-hidden bg-[linear-gradient(180deg,#9a9cb6_0,#71719a_34px,#3a3770_100px,#312e68_100%)] pl-1 pr-px pt-[11px]">
            <button class="mx-auto block h-[13px] w-[47px] border border-[#c8c8d0] bg-linear-to-b from-white to-[#e2e2e8] text-[7px] leading-[10px]">Close</button>
            <section class="mt-[10px] bg-[#d9defa]">
              <header class="flex h-[13px] items-center bg-linear-to-r from-white to-[#cdd6f8] pl-[5px] pr-[3px]"><svg class="size-2"><use href="#note"/></svg><h3 class="ml-[2px] flex-1 text-[7px] font-bold text-[#2c56a6]">Solver messages</h3><button aria-label="Collapse solver messages"><svg class="size-2"><use href="#chev"/></svg></button></header>
              <div class="h-[77px] px-2 pt-2 text-[8px]">
                <p class="whitespace-nowrap">Under-constrained sketch with<br>2 degrees of freedom</p>
                <p class="mt-[2px] text-[#2f9a55]">Solved in 0 sec</p>
                <div class="mt-[14px] flex items-center justify-between text-[7px]">
                  <label class="flex items-center gap-1"><input type="checkbox" class="size-[8px] appearance-none border border-[#8e93a8] bg-[#eef0f8]">Auto Update</label>
                  <button class="h-[14px] w-12 border border-[#a8a8b4] bg-linear-to-b from-[#f6f6f8] to-[#d8d8e0]">Update</button>
                </div>
              </div>
            </section>
            <section class="mt-1">
              <header class="flex h-[14px] items-center bg-linear-to-r from-white to-[#cdd6f8] pl-[5px] pr-[3px]"><svg class="size-2"><use href="#note"/></svg><h3 class="ml-[2px] flex-1 text-[7px] font-bold text-[#2c56a6]">Edit controls</h3><button aria-label="Expand edit controls"><svg class="size-2"><use href="#chev"/></svg></button></header>
            </section>
            <section class="mt-1 bg-[#d9defa]">
              <header class="flex h-[14px] items-center bg-linear-to-r from-white to-[#cdd6f8] pl-[5px] pr-[3px]"><svg class="size-2"><use href="#note"/></svg><h3 class="ml-[2px] flex-1 text-[7px] font-bold text-[#2c56a6]">Constraints</h3><button aria-label="Collapse constraints"><svg class="size-2"><use href="#chev"/></svg></button></header>
              <div class="px-2 pb-[9px] pt-[7px]">
                <div class="flex items-center justify-between text-[7px]"><label for="filter">Filter:</label>
                  <div class="flex h-3 w-[50px] items-center border border-[#9a9ca8] bg-linear-to-b from-[#f8f8f8] to-[#dcdce2] pr-px"><select id="filter" class="min-w-0 flex-1 appearance-none pl-[2px] leading-[10px]"><option>All</option></select><svg class="size-[6px]"><use href="#dd"/></svg></div></div>
                <label class="mt-1 flex h-[10px] items-center gap-1 text-[7px]"><input type="checkbox" checked class="peer sr-only"><svg class="size-2" viewBox="0 0 10 10"><path d="M.5.5h9v9h-9z" fill="#fff" stroke="#7d8296"/><path d="M2 5l2 2.500L8 2" fill="none" stroke="#333c70" stroke-width="1.500"/></svg>Hide Internal Aligment</label>
                <div class="mt-1 h-[99px] border border-[#9ba0ba] bg-white pl-[2px]">
                  <ul class="flex h-[57px] flex-col justify-between [&_label]:flex [&_label]:h-[11px] [&_label]:items-center [&_svg]:flex-none">
                    <li><label><input type="checkbox" checked class="peer sr-only"><svg class="size-2" viewBox="0 0 10 10"><path d="M.5.5h9v9h-9z" fill="#fff" stroke="#777"/><path d="M2 5l2 2.500L8 2" fill="none" stroke="#222" stroke-width="1.500"/></svg><svg class="ml-1 mr-1 size-[10px]"><use href="#eq"/></svg>Constraint1</label></li>
                    <li><label><input type="checkbox" checked class="peer sr-only"><svg class="size-2" viewBox="0 0 10 10"><path d="M.5.5h9v9h-9z" fill="#fff" stroke="#777"/><path d="M2 5l2 2.500L8 2" fill="none" stroke="#222" stroke-width="1.500"/></svg><svg class="ml-1 mr-1 size-[10px]"><use href="#eq"/></svg>Constraint2</label></li>
                    <li><label><input type="checkbox" checked class="peer sr-only"><svg class="size-2" viewBox="0 0 10 10"><path d="M.5.5h9v9h-9z" fill="#fff" stroke="#777"/><path d="M2 5l2 2.500L8 2" fill="none" stroke="#222" stroke-width="1.500"/></svg><svg class="ml-1 mr-1 size-[10px]"><use href="#rad"/></svg>Constraint3 (1 mm)</label></li>
                    <li><label><input type="checkbox" checked class="peer sr-only"><svg class="size-2" viewBox="0 0 10 10"><path d="M.5.5h9v9h-9z" fill="#fff" stroke="#777"/><path d="M2 5l2 2.500L8 2" fill="none" stroke="#222" stroke-width="1.500"/></svg><svg class="ml-1 mr-1 size-[10px]"><use href="#pt"/></svg>Constraint4</label></li>
                    <li><label><input type="checkbox" checked class="peer sr-only"><svg class="size-2" viewBox="0 0 10 10"><path d="M.5.5h9v9h-9z" fill="#fff" stroke="#777"/><path d="M2 5l2 2.500L8 2" fill="none" stroke="#222" stroke-width="1.500"/></svg><svg class="ml-1 mr-1 size-[10px]"><use href="#pt"/></svg>Constraint5</label></li>
                  </ul>
                </div>
              </div>
            </section>
            <section class="mt-1 bg-[#d9defa]">
              <header class="flex h-[13px] items-center bg-linear-to-r from-white to-[#cdd6f8] pl-[5px] pr-[3px]"><svg class="size-2"><use href="#note"/></svg><h3 class="ml-[2px] flex-1 text-[7px] font-bold text-[#2c56a6]">Elements</h3><button aria-label="Collapse elements"><svg class="size-2"><use href="#chev"/></svg></button></header>
              <div class="px-2 pt-[7px]">
                <div class="flex items-center justify-between text-[7px]"><label for="type">Type:</label>
                  <div class="flex h-3 w-[57px] items-center border border-[#c3c6d6] bg-[#eff0f6] pr-px text-[#9598a8]"><select id="type" disabled class="min-w-0 flex-1 appearance-none pl-[2px] leading-[10px]"><option>Edge</option></select><svg class="size-[6px] opacity-50"><use href="#dd"/></svg></div></div>
                <div class="mt-[3px] h-[90px] border border-[#9ba0ba] bg-white pl-[2px] pt-px">
                  <ul class="flex h-[69px] flex-col justify-between [&_li]:flex [&_li]:h-[11px] [&_li]:items-center [&_li]:gap-1 [&_svg]:size-[10px]">
                    <li><svg><use href="#el-circle"/></svg>1-Circle</li><li><svg><use href="#el-circle"/></svg>2-Circle</li><li><svg><use href="#el-circle"/></svg>3-Circle</li><li><svg><use href="#el-arc"/></svg>6-Arc</li><li><svg><use href="#el-arc"/></svg>7-Arc</li><li><svg><use href="#el-arc"/></svg>8-Arc</li>
                  </ul>
                </div>
              </div>
            </section>
          </div>
          <div aria-hidden="true" class="flex w-3 flex-none flex-col items-center bg-[#ededf0]">
            <svg class="h-3 w-[6px]" viewBox="0 0 6 12"><path d="M.5 7h5L3 4z" fill="#333"/></svg>
            <div class="flex h-[331px] w-[11px] items-center justify-center border border-[#b4b4bc] bg-linear-to-r from-[#f2f2f4] to-[#d2d2d8]"><svg class="h-[5px] w-[6px]" viewBox="0 0 6 5"><path d="M0 .5h6M0 2.500h6M0 4.500h6" stroke="#8b8b94"/></svg></div>
            <svg class="mt-auto h-3 w-[6px]" viewBox="0 0 6 12"><path d="M.5 5h5L3 8z" fill="#444"/></svg>
          </div>
        </div>
      </aside>

      <!-- 3D view -->
      <div class="relative flex min-w-0 flex-1 flex-col">
        <div class="min-h-0 flex-1 bg-[linear-gradient(175deg,#85783f_0,#94874f_25%,#b0a362_60%,#c3b66d_85%,#cbbe75_100%)]">
          <svg viewBox="422 96 572 438" class="block h-full w-full" role="img" aria-label="Sketch with three circles">
            <path d="M557.500 132.500H809.500A84 84 0 0 1 893.500 216.500V301.500a42 42 0 0 1-42 42H767.500V406a84 84 0 0 1-168 0V343.500H515.500a42 42 0 0 1-42-42V216.500A84 84 0 0 1 557.500 132.500z" fill="#e6dc88" stroke="#514920" stroke-width="1.200"/>
            <path d="M422 252.500h572" stroke="#d96a45" stroke-width="1.200"/>
            <path d="M631 96v438" stroke="#7fcb62" stroke-width="1.600"/>
            <g fill="none" stroke="#b73a72" stroke-width="1.800"><path d="M473.500 216.500a84 84 0 0 1 84-84M809.500 132.500a84 84 0 0 1 84 84M599.500 406a84 84 0 0 0 168 0"/></g>
            <g fill="none" stroke="#fffef2" stroke-width="1.800"><circle cx="557.500" cy="217" r="42.300"/><circle cx="809.500" cy="217" r="42.300"/><circle cx="677.500" cy="398" r="42.300"/></g>
            <path d="M557.500 216.700h48" stroke="#c8502a" stroke-width="1.200"/><path d="M592 212.500l8 4.200-8 4.200z" fill="#ee2a0c"/>
            <g fill="#e0320f"><circle cx="557.500" cy="132.500" r="1.800"/><circle cx="809.500" cy="132.500" r="1.800"/><circle cx="473.500" cy="216.500" r="1.800"/><circle cx="893.500" cy="216.500" r="1.800"/><circle cx="557.500" cy="216.700" r="1.800"/><circle cx="809.500" cy="216.700" r="1.800"/><circle cx="631" cy="252.500" r="1.800"/><circle cx="599.500" cy="406" r="1.800"/><circle cx="767.500" cy="406" r="1.800"/><circle cx="683.500" cy="405.800" r="1.900"/></g>
            <g stroke="#c8340f" stroke-width="1.400"><path d="M590.500 178h5.500M590.500 181h5.500M839 178h6M839 181h6M711 358.500h6M711 361.500h6"/></g>
            <path d="M678 403.500l2 3 2.500-3 3-5 3 5.500" fill="none" stroke="#b5411c"/><path d="M676 392v9" stroke="#e8e060"/><path d="M691 407h8" stroke="#6b2b0c" stroke-width="1.800"/>
            <g font-family="'Liberation Sans',Arial,sans-serif" fill="#cf4216"><text x="610" y="222.500" font-size="15">1 mm</text><g font-size="6" font-weight="bold"><text x="598" y="183">1</text><text x="847" y="183">2, 3</text><text x="718" y="364">2</text></g></g>
            <g><path d="M972.500 512v-10" stroke="#1c7c20" stroke-width="1.300"/><path d="M970 503l2.500-6 2.500 6z" fill="#1d8a22"/><path d="M973 512.500h9" stroke="#7a2010" stroke-width="1.300"/><path d="M981 510l6 2.500-6 2.500z" fill="#8d2210"/><circle cx="972.500" cy="512.500" r="2" fill="#20244e"/><path d="M974.500 494l1.500 2 1.500-3M989 511l2 3M991 511l-2 3M974.500 508h2l-2 2h2" stroke="#4c4426" stroke-width=".7" fill="none"/></g>
          </svg>
        </div>
        <div role="tablist" class="flex h-[15px] flex-none bg-[#f3f3f5] text-[7px] [&>div]:flex [&>div]:items-center [&>div]:gap-1 [&>div]:border [&>div]:border-t-0 [&>div]:border-[#c4c4c8] [&_svg]:flex-none">
          <div class="w-[71px] bg-[#e6e6ea] pl-[6px]"><svg class="size-[10px]"><use href="#logo"/></svg><button role="tab" aria-selected="false">Start page</button><button aria-label="Close start page"><svg class="size-[7px]" viewBox="0 0 8 8"><path d="M.5.5h7v7h-7z" fill="#f2f2f2" stroke="#b5b5b5"/></svg></button></div>
          <div class="w-[84px] bg-white pl-[7px]"><svg class="size-[10px]"><use href="#logo"/></svg><button role="tab" aria-selected="true">Unnamed : 1*</button><button aria-label="Close document"><svg class="size-2" viewBox="0 0 8 8"><path d="M.5.5h7v7h-7z" fill="#df6a55" stroke="#b94a3a"/><path d="M2.500 2.500l3 3M5.500 2.500l-3 3" stroke="#fff"/></svg></button></div>
        </div>
        <a href="#subscribe" class="absolute bottom-[4px] right-[11px] flex h-[13px] w-[39px] items-end justify-center rounded-sm bg-[#d8504c] font-['Liberation_Sans',Arial,sans-serif] text-[6px] leading-[10px] font-bold text-white">SUBSCRIBE</a>
      </div>
    </div>

    <footer class="flex h-[13px] flex-none items-start overflow-hidden border-b border-[#8c8f98] bg-[#f2f2f4] pl-[2px] pr-3 pt-1">
      <p class="min-w-0 flex-1 truncate">Preselected: Unnamed.Sketch001.Vertex1 (1.110407,-3.453736,1.011000)</p>
      <button class="flex items-center gap-[3px]"><svg class="size-2" viewBox="0 0 8 8"><path d="M1.500 8V3a2.500 2.500 0 0 1 5 0v5M4 1v3" fill="none" stroke="#555"/></svg>Revit<svg class="size-[5px]"><use href="#dd"/></svg></button>
      <span class="ml-2">13.63 mm x 10.43 mm</span>
    </footer>
  </main>
</div>
</body>
</html>
